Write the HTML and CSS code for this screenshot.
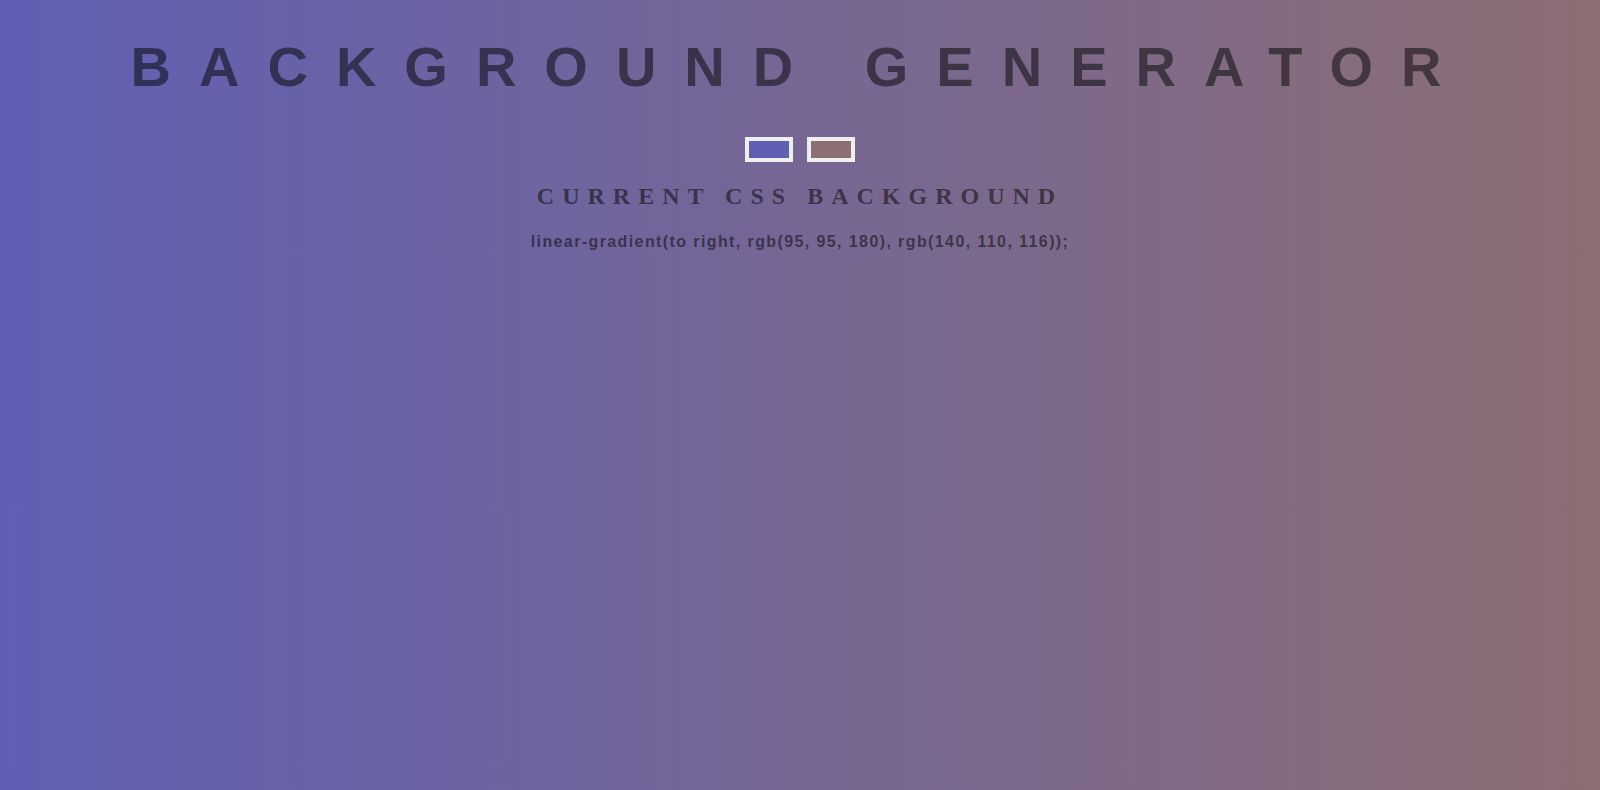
FILE: index.html
```html
<!DOCTYPE html>
<html lang="en">
<head>
<meta charset="utf-8">
<title>Background Generator</title>
<link rel="stylesheet" href="styles.css">
</head>
<body>
  <h1 class="title">BACKGROUND GENERATOR</h1>
  <div class="pickers">
    <input class="picker" type="color" name="color1" value="#5f5fb4">
    <input class="picker" type="color" name="color2" value="#8c6e74">
  </div>
  <h2 class="subtitle">CURRENT CSS BACKGROUND</h2>
  <h3 class="css-output">linear-gradient(to right, rgb(95, 95, 180), rgb(140, 110, 116));</h3>
</body>
</html>
```

FILE: styles.css
```css
html {
  min-height: 100%;
}

body {
  margin: 0;
  min-height: 100vh;
  font-family: "Liberation Serif", "Times New Roman", serif;
  color: rgba(0, 0, 0, 0.5);
  text-align: center;
  letter-spacing: 8px;
  background: linear-gradient(to right, rgb(95, 95, 180), rgb(140, 110, 116));
}

.title {
  margin: 35px 0 0;
  font: 700 56px/64px "Liberation Sans", Arial, sans-serif;
  letter-spacing: 28px;
  color: rgba(0, 0, 0, 0.5);
}

.pickers {
  display: flex;
  justify-content: center;
  gap: 14px;
  margin-top: 38px;
}

.picker {
  -webkit-appearance: none;
  appearance: none;
  box-sizing: border-box;
  width: 48px;
  height: 25px;
  margin: 0;
  padding: 4px;
  border: none;
  background: #efefef;
  cursor: pointer;
}

.picker::-webkit-color-swatch-wrapper {
  padding: 0;
}

.picker::-webkit-color-swatch {
  border: none;
}

.subtitle {
  margin: 20px 0 0;
  font: 700 24px/28px "Liberation Serif", "Times New Roman", serif;
  letter-spacing: 8px;
  color: rgba(0, 0, 0, 0.5);
}

.css-output {
  margin: 22px 0 0;
  font: 700 16px/20px "Liberation Sans", Arial, sans-serif;
  letter-spacing: 1.4px;
  color: rgba(0, 0, 0, 0.5);
}
```
